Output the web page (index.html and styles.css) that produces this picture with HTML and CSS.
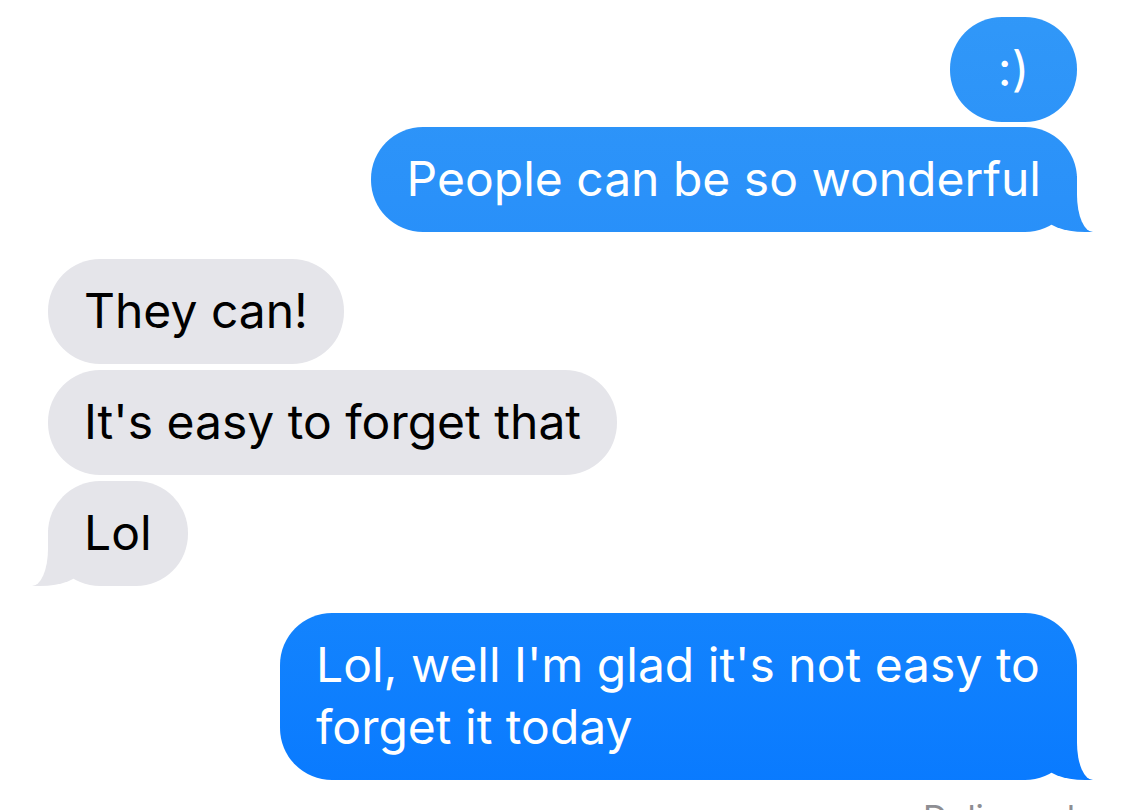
FILE: index.html
```html
<!DOCTYPE html>
<html lang="en">
<head>
  <meta charset="UTF-8">
  <meta name="viewport" content="width=device-width, initial-scale=1.0">
  <title>Messages</title>
  <link rel="stylesheet" href="styles.css">
</head>
<body>
  <div class="thread">
    <div class="group sent">
      <div class="bubble smiley">:)</div>
      <div class="bubble tail">People can be so wonderful</div>
    </div>
    <div class="group received">
      <div class="bubble">They can!</div>
      <div class="bubble">It's easy to forget that</div>
      <div class="bubble tail">Lol</div>
    </div>
    <div class="group sent">
      <div class="bubble tail wide">Lol, well I'm glad it's not easy to forget it today</div>
    </div>
    <div class="status">Delivered</div>
  </div>
</body>
</html>
```

FILE: styles.css
```css
body {
  margin: 0;
  background: #ffffff;
  font-family: 'Inter', 'Liberation Sans', sans-serif;
  overflow: hidden;
  height: 810px;
}
.thread {
  display: flex;
  flex-direction: column;
  padding: 17px 48px 0;
}
.group {
  display: flex;
  flex-direction: column;
  gap: 5px;
  margin-bottom: 27px;
}
.group.sent {
  align-items: flex-end;
}
.group.received {
  align-items: flex-start;
  gap: 6px;
}
.bubble {
  position: relative;
  z-index: 0;
  box-sizing: border-box;
  max-width: 800px;
  padding: 21px 36px 22px;
  font-size: 48px;
  line-height: 62px;
  border-radius: 52px;
}
.sent .bubble {
  color: #ffffff;
  background: linear-gradient(to bottom, #3198f8 0, #2a91f9 200px, #1484fd 600px, #0879ff 810px) fixed;
}
.received .bubble {
  color: #000000;
  background: #e5e5ea;
}
.smiley {
  min-width: 127px;
  text-align: center;
}
.wide {
  width: 797px;
}

/* tails */
.bubble.tail::before,
.bubble.tail::after {
  content: "";
  position: absolute;
  z-index: -1;
  bottom: 0;
  height: 56px;
}
.sent .bubble.tail::before {
  right: -16px;
  width: 48px;
  background: inherit;
  border-bottom-left-radius: 40px 16px;
}
.sent .bubble.tail::after {
  right: -40px;
  width: 40px;
  background: #ffffff;
  border-bottom-left-radius: 16px 37px;
}
.received .bubble.tail::before {
  left: -16px;
  width: 48px;
  background: #e5e5ea;
  border-bottom-right-radius: 40px 16px;
}
.received .bubble.tail::after {
  left: -40px;
  width: 40px;
  background: #ffffff;
  border-bottom-right-radius: 16px 37px;
}

.status {
  align-self: flex-end;
  margin-top: -10px;
  padding-right: 2px;
  font-size: 34px;
  color: #8e8e93;
}
```
